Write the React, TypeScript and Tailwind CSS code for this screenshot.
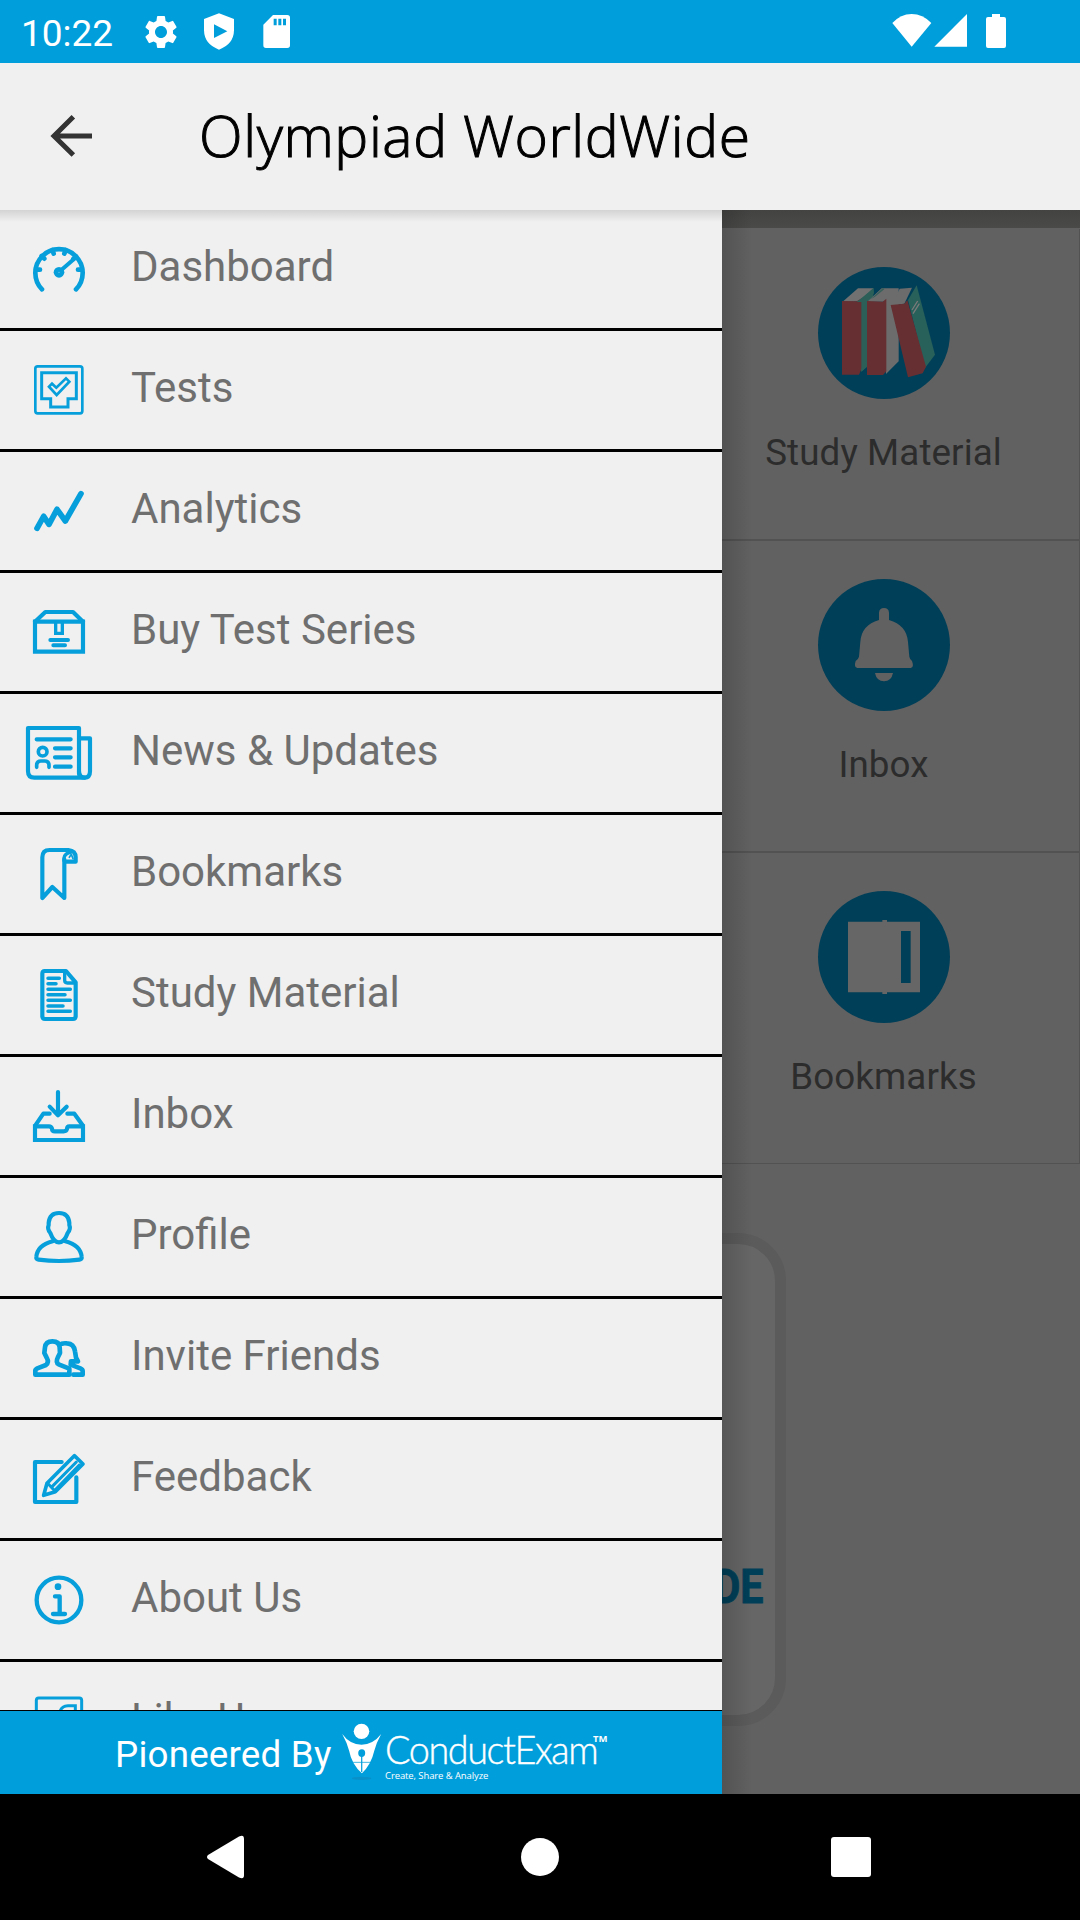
import type { ReactNode } from "react";
import { MdSettings } from "react-icons/md";

function MenuIcon({ top, children }: { top: number; children: ReactNode }) {
  return (
    <svg
      className="h-[118px] w-[118px] shrink-0"
      viewBox={`0 ${top} 354 354`}
      fill="none"
      stroke="#069fdb"
      strokeWidth={12.5}
      strokeLinecap="round"
      strokeLinejoin="round"
    >
      {children}
    </svg>
  );
}

const menu: { label: string; top: number; art: ReactNode }[] = [
  {
    label: "Dashboard",
    top: 0,
    art: (
      <>
        <path strokeWidth={14} d="M126 238A71 71 0 1 1 228 238" />
        <path strokeWidth={14} d="M108 179H120M234 179H246M125 138L133 146M157 120L161 131M197 120L193 131M220 147L228 139" />
        <path strokeWidth={12} d="M184 180L222 147" />
        <circle cx="177" cy="187" r="16" fill="#069fdb" stroke="none" />
        <circle cx="177" cy="187" r="2" fill="#7fc9e8" stroke="none" />
      </>
    ),
  },
  {
    label: "Tests",
    top: 363,
    art: (
      <>
        <rect x="106" y="469" width="141" height="141" rx="7" strokeWidth={8} />
        <path strokeWidth={9} strokeLinejoin="miter" d="M125 488H229V566H204V591H152V566H125Z" />
        <path strokeWidth={8} strokeLinejoin="miter" d="M147 530L156 521L169 533L198 505L208 515L170 555Z" />
      </>
    ),
  },
  {
    label: "Analytics",
    top: 726,
    art: <path strokeWidth={17} d="M111 955L131 919L147 943L171 898L196 933L243 851" />,
  },
  {
    label: "Buy Test Series",
    top: 9,
    art: (
      <>
        <path strokeLinejoin="miter" d="M105 155V245H249V155Z" />
        <path d="M105 155L136 126H219L249 155" />
        <path strokeWidth={10} strokeLinejoin="miter" d="M167 158V190H187V158" />
        <path strokeWidth={12} d="M151 210H204M160 226H195" />
      </>
    ),
  },
  {
    label: "News & Updates",
    top: 372,
    art: (
      <>
        <path d="M84 474H237V610Q239 623 254 623H103Q84 623 84 604Z" />
        <path d="M237 505H270V604Q270 623 254 623Q237 623 237 604" />
        <path d="M110 508H212M165 535H212M165 562H212M165 590H212" />
        <circle cx="128" cy="545" r="13" strokeWidth={11} />
        <path strokeWidth={11} d="M110 592V586Q110 573 123 573H134Q147 573 147 586V592" />
      </>
    ),
  },
  {
    label: "Bookmarks",
    top: 735,
    art: (
      <>
        <path d="M193 868V984L157 951L127 984V862Q127 840 149 840H205Q227 842 227 862V875H195" />
        <path strokeWidth={10} d="M192 872V864Q194 850 213 846" />
        <path strokeWidth={5} d="M208 862L214 853L219 866" />
      </>
    ),
  },
  {
    label: "Study Material",
    top: 18,
    art: (
      <>
        <path d="M134 123H198L227 157V259Q227 267 219 267H135Q127 267 127 259V131Q127 123 134 123Z" />
        <path strokeWidth={10} d="M194 128V151Q194 159 202 159H222" />
        <path strokeWidth={10.5} d="M144 145H178M144 161H168M144 178H211M144 194H195M144 211H211M144 228H189M144 244H211" />
      </>
    ),
  },
  {
    label: "Inbox",
    top: 381,
    art: (
      <>
        <path d="M174 486V550M149 530L174 556L200 530" />
        <path d="M149 551H130L106 586M202 551H223L248 586" />
        <path strokeLinejoin="miter" d="M105 589V630H249V589H208Q201 589 201 597Q199 604 191 604H165Q156 604 156 596Q154 589 147 589Z" />
      </>
    ),
  },
  {
    label: "Profile",
    top: 744,
    art: (
      <>
        <path d="M177 849Q205 849 208 878V885Q213 897 203 909Q193 937 177 937Q161 937 151 909Q141 897 146 885V878Q149 849 177 849Z" />
        <path d="M158 934Q112 946 109 981Q108 987 116 989Q177 997 238 989Q246 987 245 981Q242 946 196 934" />
      </>
    ),
  },
  {
    label: "Invite Friends",
    top: 27,
    art: (
      <>
        <path
          strokeWidth={14}
          d="M157 154Q178 154 179 172L180 189L174 201Q166 217 176 223L208 236V254H106V242Q106 238 112 235L138 225Q148 217 140 203L133 189L135 172Q137 154 157 154Z"
        />
        <path
          strokeWidth={14}
          d="M185 161Q191 159 201 160Q222 161 225 184L228 203L234 214H213L212 224L241 235Q248 238 248 243V254H220"
        />
      </>
    ),
  },
  {
    label: "Feedback",
    top: 390,
    art: (
      <>
        <path d="M185 516H105V636H229V562" />
        <path strokeWidth={11} d="M223 497L249 522L166 605L131 616L141 580Z" />
        <path strokeWidth={9} d="M145 582L164 602M157 589L229 516" />
        <path strokeWidth={7} d="M166 598L238 524" />
      </>
    ),
  },
  {
    label: "About Us",
    top: 753,
    art: (
      <>
        <circle cx="177" cy="930" r="67" strokeWidth={13} />
        <circle cx="174" cy="890" r="10" fill="#069fdb" stroke="none" />
        <path strokeWidth={13} d="M165 919H179V970M159 972H195" />
      </>
    ),
  },
  {
    label: "Like Us",
    top: 1116,
    art: (
      <>
        <rect x="109" y="1224" width="136" height="138" rx="7" strokeWidth={9} />
        <path strokeWidth={9} strokeLinejoin="miter" d="M180 1266Q183 1248 204 1247H226V1300" />
      </>
    ),
  },
];

const tiles: { label: string; view: string; art: ReactNode }[] = [
  {
    label: "Study Material",
    view: "354 201 396 396",
    art: (
      <>
        <path fill="#2b5f58" d="M483 303L520 264V345L501 360V500L483 515Z" />
        <path fill="#717171" d="M427 306L474 265H520L480 304Z" />
        <path fill="#662f32" d="M426 303L470 304L487 294V500L477 524H426Z" />
        <path fill="#2b5f58" d="M470 306L484 295L521 264L522 280L501 303V500L484 515V306Z" />
        <path fill="#6c6c6c" d="M502 305L545 265H596V484L558 522L555 305Z" />
        <path fill="#37605b" d="M512 298L549 264L553 268L525 290Z" />
        <path fill="#662f32" d="M501 303L548 305L559 296V514L549 525H501Z" />
        <path fill="#28605a" d="M624 300L650 256L705 464L675 504Z" />
        <path fill="#6c6c6c" d="M577 316L599 266L636 263L613 311Z" />
        <path fill="#662f32" d="M572 315L613 311L622 300L678 500L668 520L624 532Z" />
        <path stroke="#7a7a7a" strokeWidth={4} d="M636 330L653 303M639 341L658 311" />
      </>
    ),
  },
  {
    label: "Inbox",
    view: "354 57 396 396",
    art: (
      <>
        <path
          fill="#616161"
          d="M537 180V158Q538 144 552 144Q566 144 567 158V180Q620 195 624 246L628 290Q629 297 636 303Q643 322 632 324H472Q461 322 467 303Q476 296 477 290L481 246Q484 195 537 180Z"
        />
        <path fill="#616161" d="M525 339H579Q574 364 552 364Q530 364 525 339Z" />
      </>
    ),
  },
  {
    label: "Bookmarks",
    view: "354 93 396 396",
    art: (
      <>
        <path fill="#666666" d="M444 185H547V180H561V185H660V397H561V402H547V397H444Z" />
        <path fill="#003f58" d="M603 213H632V369H603Z" />
      </>
    ),
  },
];

function StatusBar() {
  return (
    <div className="flex h-[63px] shrink-0 items-start bg-[#009edb] text-white">
      <span className="ml-[21px] mt-[12px] w-[120px] text-[37px] leading-[43px]">10:22</span>
      <MdSettings className="mt-[11.5px] size-10" />
      <svg className="ml-[23px] mt-[13px] h-[37px] w-[30px]" viewBox="612 40 90 111" fill="currentColor">
        <path fillRule="evenodd" d="M657 41L702 58V92Q701 134 657 150Q613 134 612 92V58ZM642 74V115L682 95Z" />
      </svg>
      <svg className="ml-[29px] mt-[15px] h-[33px] w-[27px]" viewBox="790 45 81 99" fill="currentColor">
        <path
          fillRule="evenodd"
          d="M820 45H863Q871 45 871 53V136Q871 144 863 144H799Q791 144 791 136V74ZM822 56V76H831V56ZM836 56V76H845V56ZM850 56V76H859V56Z"
        />
      </svg>
      <div className="ml-auto mr-[73px] mt-[14px] flex items-start">
        <svg className="h-[33px] w-[40px]" viewBox="95 42 120 99" fill="currentColor">
          <path d="M154 140L96 69Q121 42 154 42Q187 42 213 69Z" />
        </svg>
        <svg className="ml-[2px] h-[33px] w-[33px]" viewBox="222 42 99 99" fill="currentColor">
          <path d="M321 42V140H223Z" />
        </svg>
        <svg className="ml-[19px] h-[34px] w-[21px]" viewBox="378 42 63 102" fill="currentColor">
          <path d="M396 42H420V51H432Q438 51 438 57V138Q438 144 432 144H384Q378 144 378 138V57Q378 51 384 51H396Z" />
        </svg>
      </div>
    </div>
  );
}

function Header() {
  return (
    <header className="flex h-[147px] shrink-0 items-start bg-[#f0f0f0]">
      <svg className="ml-[48px] mt-[49px] h-[48px] w-[48px]" viewBox="144 336 144 144" fill="none" stroke="#333333" strokeWidth={15}>
        <path d="M276 408H163M220 350L162 408L220 465" />
      </svg>
      <h1 className="ml-[103px] mt-[32px] whitespace-nowrap font-['Open_Sans'] text-[57px] font-light leading-[80px] tracking-[0.6px] text-black [-webkit-text-stroke:1px_#000]">
        Olympiad WorldWide
      </h1>
    </header>
  );
}

function Drawer() {
  return (
    <aside className="flex w-[722px] shrink-0 flex-col bg-[#f0f0f0]">
      <div className="relative h-[1500px] overflow-hidden">
        <div className="absolute inset-x-0 top-0 h-[12px] bg-linear-to-b from-black/12 to-transparent" />
        <ul>
          {menu.map((item) => (
            <li key={item.label} className="flex h-[121px] border-b-[3px] border-black">
              <MenuIcon top={item.top}>{item.art}</MenuIcon>
              <span className="ml-[13px] mt-[32px] whitespace-nowrap text-[42px] leading-[50px] text-[#6f6f6f]">
                {item.label}
              </span>
            </li>
          ))}
        </ul>
      </div>
      <div className="flex h-[84px] items-start border-t border-black bg-[#009edb] text-white">
        <span className="ml-[115px] mt-[22px] w-[226px] whitespace-nowrap text-[36.75px] leading-[44px] tracking-[0.2px]">
          Pioneered By
        </span>
        <svg className="mt-[12px] h-[58px] w-[41px]" viewBox="590 130 100 174" preserveAspectRatio="none">
          <ellipse cx="640" cy="155" rx="19" ry="23" fill="#fff" />
          <ellipse cx="640" cy="296" rx="24" ry="5" fill="#0a90c8" />
          <path
            fill="#fff"
            fillRule="evenodd"
            d="M593 163Q612 195 640 195Q668 195 688 163Q676 190 671 214Q664 254 641 281Q616 254 610 214Q605 190 593 163ZM632 220Q632 230 639 232V277H642V232Q649 230 649 220Q649 210 641 209Q632 210 632 220Z"
          />
          <path stroke="#009edb" strokeWidth={2} d="M615 248H664" />
        </svg>
        <div className="ml-[3px] mt-[19px] flex flex-col">
          <div className="flex h-[38px] items-start">
            <span className="w-[208px] origin-left scale-x-[0.945] whitespace-nowrap font-['Lato'] text-[40px] font-light leading-[38px] tracking-[-1.5px] [-webkit-text-stroke:0.4px_#fff]">
              ConductExam
            </span>
            <span className="mt-[3px] font-['Open_Sans'] text-[9.5px] font-bold leading-[12px]">TM</span>
          </div>
          <span className="mt-[2px] whitespace-nowrap font-['Open_Sans'] text-[9.5px] leading-[12px] tracking-[-0.1px]">
            Create, Share &amp; Analyze
          </span>
        </div>
      </div>
    </aside>
  );
}

function Dashboard() {
  return (
    <main className="relative flex w-[358px] flex-col overflow-hidden bg-[#616161]">
      <div className="h-[18px] shrink-0 bg-linear-to-b from-[#434342] to-[#4a4a49]" />
      <div className="-ml-[34px] mt-px flex w-[392px] flex-col">
        {tiles.map((tile) => (
          <div
            key={tile.label}
            className="flex h-[312px] flex-col items-center border-b-2 border-r border-[#525252] pt-[38px] last:h-[311px] last:border-b"
          >
            <svg className="size-[132px]" viewBox={tile.view}>
              <circle
                cx={Number(tile.view.split(" ")[0]) + 198}
                cy={Number(tile.view.split(" ")[1]) + 198}
                r="198"
                fill="#003f58"
              />
              {tile.art}
            </svg>
            <span className="mt-[32px] whitespace-nowrap text-[36.75px] leading-[44px] tracking-[0.1px] text-[#2c2c2c]">
              {tile.label}
            </span>
          </div>
        ))}
      </div>
      <div className="-ml-[60px] mt-[69px] flex h-[493px] w-[124px] justify-end rounded-r-[48px] border-[11px] border-[#5b5b5b] bg-[#666666] pr-[12px] pt-[314px]">
        <span className="origin-right scale-x-[0.84] text-[49px] font-bold leading-[58px] text-[#003f58] [-webkit-text-stroke:1px_#003f58]">
          DE
        </span>
      </div>
      <div className="absolute inset-y-0 left-0 w-[30px] bg-linear-to-r from-black/15 to-transparent" />
    </main>
  );
}

function NavBar() {
  return (
    <nav className="flex h-[126px] shrink-0 items-center bg-black">
      <svg className="ml-[206px] h-[44px] w-[38px]" viewBox="0 0 38 44">
        <path fill="#fff" d="M2 20L33 1.500Q38 -1 38 4V40Q38 45 33 42.500L2 24Q0 22 2 20Z" />
      </svg>
      <div className="ml-[277px] size-[38px] rounded-full bg-white" />
      <div className="ml-[272px] size-[40px] rounded-[3px] bg-white" />
    </nav>
  );
}

export default function App() {
  return (
    <div className="flex h-[1920px] w-[1080px] flex-col overflow-hidden font-['Roboto',sans-serif]">
      <StatusBar />
      <Header />
      <div className="flex h-[1584px] shrink-0">
        <Drawer />
        <Dashboard />
      </div>
      <NavBar />
    </div>
  );
}
